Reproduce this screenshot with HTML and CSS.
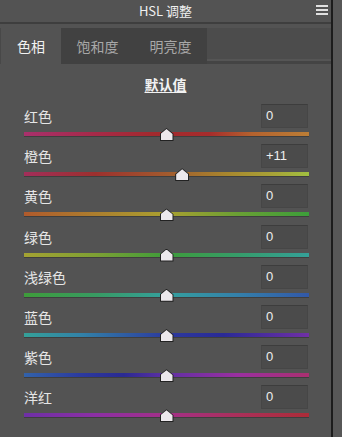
FILE: index.html
```html
<!DOCTYPE html>
<html lang="zh-CN">
<head>
    <meta charset="UTF-8">
    <meta name="viewport" content="width=device-width, initial-scale=1.0">
    <title>HSL 调整</title>
    <link rel="stylesheet" href="styles.css">
</head>
<body>
    <div class="panel">
        <div class="header">
            <span class="title">HSL 调整</span>
            <span class="menu"><i></i><i></i><i></i></span>
        </div>
        <div class="tabs">
            <div class="tab active">色相</div>
            <div class="tab">饱和度</div>
            <div class="tab">明亮度</div>
            <div class="tab-rest"></div>
        </div>
        <div class="default"><span>默认值</span></div>

        <div class="rows">
            <div class="row">
                <div class="row-top"><span class="label">红色</span><span class="value">0</span></div>
                <div class="track red"><span class="thumb" style="left: 50%"></span></div>
            </div>
            <div class="row">
                <div class="row-top"><span class="label">橙色</span><span class="value">+11</span></div>
                <div class="track orange"><span class="thumb" style="left: 55.5%"></span></div>
            </div>
            <div class="row">
                <div class="row-top"><span class="label">黄色</span><span class="value">0</span></div>
                <div class="track yellow"><span class="thumb" style="left: 50%"></span></div>
            </div>
            <div class="row">
                <div class="row-top"><span class="label">绿色</span><span class="value">0</span></div>
                <div class="track green"><span class="thumb" style="left: 50%"></span></div>
            </div>
            <div class="row">
                <div class="row-top"><span class="label">浅绿色</span><span class="value">0</span></div>
                <div class="track aqua"><span class="thumb" style="left: 50%"></span></div>
            </div>
            <div class="row">
                <div class="row-top"><span class="label">蓝色</span><span class="value">0</span></div>
                <div class="track blue"><span class="thumb" style="left: 50%"></span></div>
            </div>
            <div class="row">
                <div class="row-top"><span class="label">紫色</span><span class="value">0</span></div>
                <div class="track purple"><span class="thumb" style="left: 50%"></span></div>
            </div>
            <div class="row">
                <div class="row-top"><span class="label">洋红</span><span class="value">0</span></div>
                <div class="track magenta"><span class="thumb" style="left: 50%"></span></div>
            </div>
        </div>
    </div>
</body>
</html>
```

FILE: styles.css
```css
body {
    margin: 0;
    background: #575757;
    font-family: "Noto Sans CJK SC", "Noto Sans", sans-serif;
    color: #dedede;
}
.panel {
    width: 333px;
    height: 437px;
    background: #535353;
    border-right: 2px solid #1c1c1c;
    box-sizing: border-box;
    overflow: hidden;
}
.header {
    position: relative;
    height: 22px;
    border-bottom: 2px solid #3e3e3e;
    display: flex;
    align-items: center;
    justify-content: center;
}
.title {
    font-size: 13px;
    color: #f0f0f0;
    line-height: 22px;
}
.menu {
    position: absolute;
    right: 3px;
    top: 5px;
    width: 12px;
    display: flex;
    flex-direction: column;
    gap: 2px;
}
.menu i {
    display: block;
    height: 2px;
    background: #e0e0e0;
}
.tabs {
    margin-top: 4px;
    height: 36px;
    display: flex;
}
.tab {
    width: 73px;
    background: #414141;
    font-size: 14px;
    color: #a8a8a8;
    display: flex;
    align-items: center;
    justify-content: center;
}
.tab.active {
    width: 60px;
    background: #535353;
    color: #f2f2f2;
    border-left: 1px solid #484848;
}
.tab-rest {
    flex: 1;
    background: #4c4c4c;
    border-bottom: 3px solid #444;
    box-shadow: inset 0 -2px 0 #555;
}
.default {
    height: 40px;
    display: flex;
    align-items: center;
    justify-content: center;
    font-size: 14px;
    font-weight: bold;
    color: #f2f2f2;
}
.default span {
    text-decoration: underline;
    text-underline-offset: 2px;
}
.rows {
    padding: 0 22px 0 24px;
}
.row {
    height: 40.2px;
}
.row-top {
    height: 24px;
    display: flex;
    align-items: center;
    justify-content: space-between;
}
.label {
    font-size: 14px;
    color: #e6e6e6;
}
.value {
    width: 47px;
    height: 24px;
    box-sizing: border-box;
    background: #4b4b4b;
    border: 1px solid #464646;
    border-top-color: #3d3d3d;
    margin-right: 1px;
    padding-left: 4px;
    font-family: "Liberation Sans", Arial, sans-serif;
    font-size: 13px;
    line-height: 22px;
    color: #eeeeee;
}
.track {
    position: relative;
    margin-top: 4px;
    height: 4px;
    box-shadow: 0 1px 0 rgba(0, 0, 0, 0.25);
}
.thumb {
    position: absolute;
    top: -4px;
    width: 14px;
    height: 13px;
    margin-left: -7px;
    background: #222;
    clip-path: polygon(50% 0, 100% 45%, 100% 100%, 0 100%, 0 45%);
}
.thumb::after {
    content: "";
    position: absolute;
    left: 1px;
    top: 1px;
    right: 1px;
    bottom: 1px;
    background: #ece8ec;
    clip-path: polygon(50% 0, 100% 45%, 100% 100%, 0 100%, 0 45%);
}
.red {
    background: linear-gradient(to right, #a8306c 0%, #a62a48 25%, #a22a2e 45%, #a62c2c 65%, #b4622e 80%, #bc7e36 100%);
}
.orange {
    background: linear-gradient(to right, #a22e5a 0%, #9c302e 25%, #a25a2e 50%, #a8882e 72%, #a8a438 88%, #a0c040 100%);
}
.yellow {
    background: linear-gradient(to right, #b05a2c 0%, #ac7e2e 25%, #aaa030 50%, #6aa034 75%, #3c9e3a 100%);
}
.green {
    background: linear-gradient(to right, #a4a232 0%, #7ea034 25%, #3e9c3a 50%, #369c6a 75%, #34a098 100%);
}
.aqua {
    background: linear-gradient(to right, #3e9c3a 0%, #389a62 25%, #34a09e 50%, #3480aa 75%, #3258a8 100%);
}
.blue {
    background: linear-gradient(to right, #34a098 0%, #3282a8 20%, #2c3a9e 50%, #2a2a96 70%, #7030a6 100%);
}
.purple {
    background: linear-gradient(to right, #3262aa 0%, #2c3a9e 20%, #2a2a92 35%, #6030a4 50%, #9a30a0 75%, #aa3070 100%);
}
.magenta {
    background: linear-gradient(to right, #6e30a6 0%, #8c30a4 25%, #a43088 50%, #aa305a 75%, #ac2c38 100%);
}
```
